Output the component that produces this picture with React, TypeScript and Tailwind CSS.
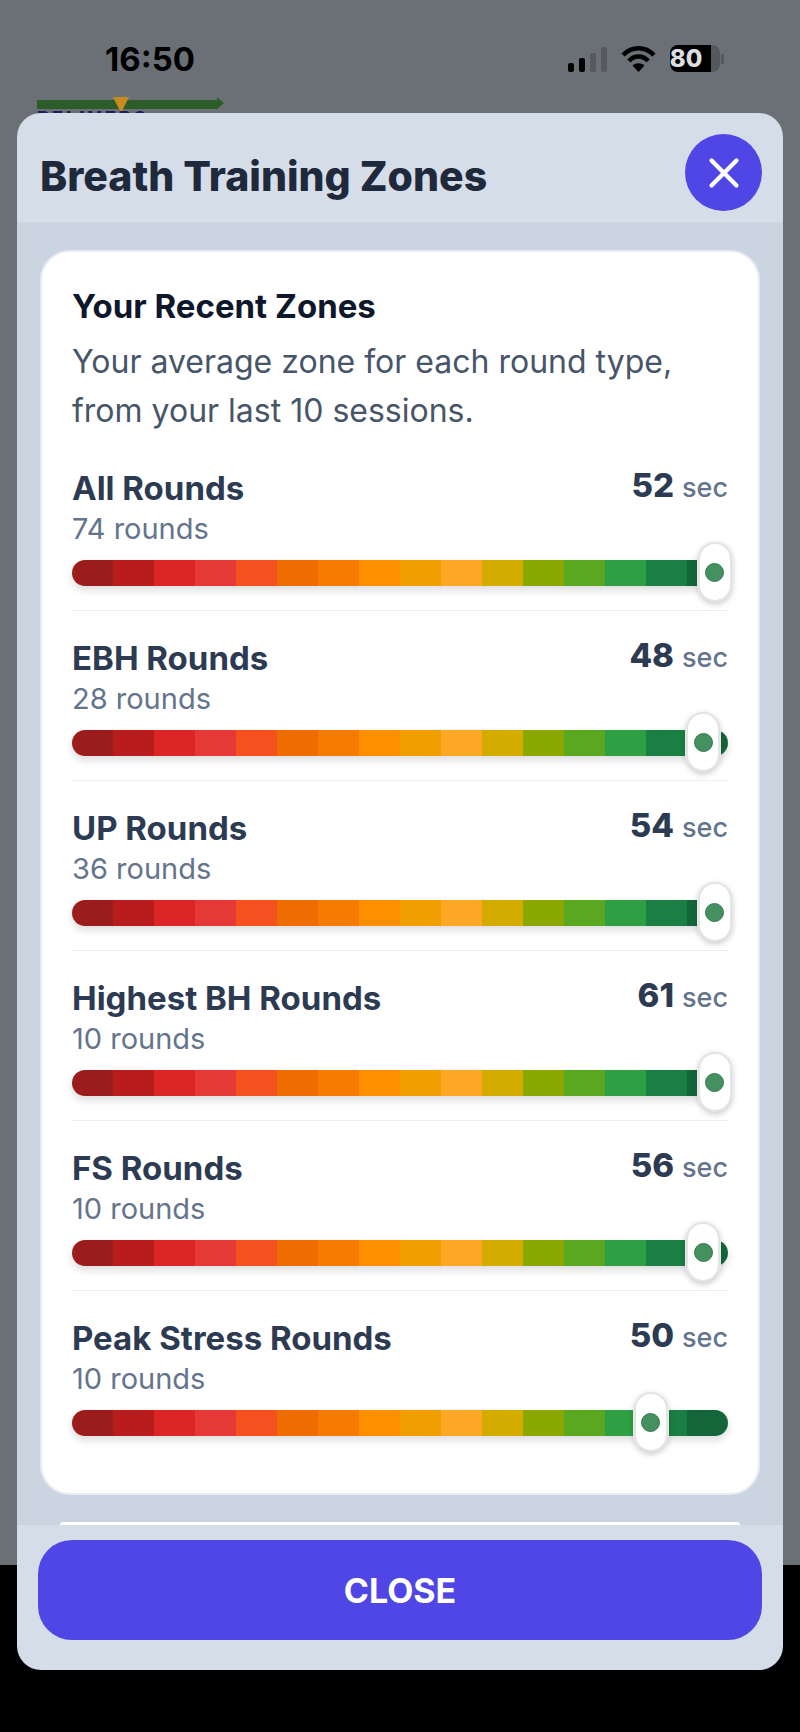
import { X } from 'lucide-react';

type Zone = { name: string; rounds: number; secs: number; pos: number };

const zones: Zone[] = [
  { name: 'All Rounds', rounds: 74, secs: 52, pos: 98 },
  { name: 'EBH Rounds', rounds: 28, secs: 48, pos: 96.2 },
  { name: 'UP Rounds', rounds: 36, secs: 54, pos: 98 },
  { name: 'Highest BH Rounds', rounds: 10, secs: 61, pos: 98 },
  { name: 'FS Rounds', rounds: 10, secs: 56, pos: 96.2 },
  { name: 'Peak Stress Rounds', rounds: 10, secs: 50, pos: 88.2 },
];

const segments = [
  '#9b1c1c', '#b91c1c', '#dc2626', '#e53935', '#f4511e', '#ef6c00', '#f57c00', '#ff8f00',
  '#f29d00', '#ffa726', '#d4ac00', '#8aa800', '#5aa820', '#2ea043', '#1a7f42', '#14663a',
];

function StatusBar() {
  return (
    <div className="flex h-[97px] items-start justify-between pl-[105px] pr-[76px] pt-[40px]">
      <span className="text-[33px] leading-[38px] font-bold text-black">16:50</span>
      <div className="flex items-center pt-[5px]">
        <div className="flex h-[26px] items-end gap-[5px]">
          <div className="h-[9px] w-[6px] rounded-[2px] bg-black" />
          <div className="h-[14px] w-[6px] rounded-[2px] bg-black" />
          <div className="h-[19px] w-[6px] rounded-[2px] bg-[#565a5e]" />
          <div className="h-[25px] w-[6px] rounded-[2px] bg-[#565a5e]" />
        </div>
        <svg className="ml-[14px]" width="35" height="26" viewBox="0 0 35 26">
          <path d="M2 9 C11 0 24 0 33 9" fill="none" stroke="#000" strokeWidth="4.5" />
          <path d="M8 15 C13 9 22 9 27 15" fill="none" stroke="#000" strokeWidth="4.5" />
          <path d="M17.5 26 L11.5 19.5 C15 16.5 20 16.5 23.5 19.5 Z" fill="#000" />
        </svg>
        <div className="ml-[14px] flex h-[27px] w-[50px] overflow-hidden rounded-[8px] bg-[#55585c]">
          <div className="flex h-full w-[41px] items-center justify-end bg-black">
            <span className="w-[50px] shrink-0 text-center text-[24px] leading-none font-extrabold text-[#dcdee0]">80</span>
          </div>
        </div>
        <div className="ml-[1px] h-[10px] w-[3px] rounded-r-[2px] bg-[#55585c]" />
      </div>
    </div>
  );
}

function ZoneBar({ pos }: { pos: number }) {
  return (
    <div className="relative mt-[13px] h-[26px] rounded-full shadow-[0_4px_8px_rgba(0,0,0,0.14)]">
      <div className="flex h-full overflow-hidden rounded-full">
        {segments.map((color) => (
          <div key={color} className="h-full flex-1" style={{ backgroundColor: color }} />
        ))}
      </div>
      <div
        className="absolute top-[-18px] flex h-[60px] w-[34px] -translate-x-1/2 items-center justify-center rounded-full border-2 border-[#e2e4e6] bg-white shadow-[0_2px_6px_rgba(0,0,0,0.22),0_0_0_1px_#fff]"
        style={{ left: `${pos}%` }}
      >
        <div className="h-[19px] w-[19px] rounded-full border border-[#35774f] bg-[#44905f]" />
      </div>
    </div>
  );
}

function ZoneRow({ zone, last }: { zone: Zone; last: boolean }) {
  return (
    <div className={last ? 'pt-[27px]' : 'border-b border-[#eceef1] pt-[27px] pb-[24px]'}>
      <div className="flex h-[40px] items-center justify-between">
        <span className="text-[33px] leading-[40px] font-bold text-[#2d3b52]">{zone.name}</span>
        <span className="leading-[40px]">
          <span className="text-[33px] font-extrabold text-[#2d3b52]">{zone.secs}</span>
          <span className="ml-[8px] text-[27px] font-medium text-[#64748b]">sec</span>
        </span>
      </div>
      <div className="mt-[3px] h-[36px] text-[29px] leading-[36px] text-[#64748b]">{zone.rounds} rounds</div>
      <ZoneBar pos={zone.pos} />
    </div>
  );
}

export default function App() {
  return (
    <div className="relative h-[1732px] w-[800px] overflow-hidden bg-black font-['Inter',sans-serif]">
      <div className="h-[1565px] bg-[#6b7076]">
        <StatusBar />
        {/* app logo, mostly hidden by the sheet */}
        <div className="relative ml-[37px] h-[16px] w-[190px] overflow-hidden">
          <svg className="absolute top-0 left-0" width="190" height="16" viewBox="0 0 190 16">
            <path d="M0 3 H180 V0 L187 6 L180 12 H0 Z" fill="#2c5c27" />
            <path d="M76 0 H92 L84 16 Z" fill="#c98a1f" />
          </svg>
          <span className="absolute top-[11px] left-0 text-[18px] leading-[20px] font-black tracking-[3px] text-[#1c1f5e]">BELIVERS</span>
        </div>
      </div>

      <div className="absolute top-[113px] left-[17px] flex h-[1557px] w-[766px] flex-col overflow-hidden rounded-[24px] bg-[#d4dde8]">
        <div className="flex h-[109px] shrink-0 items-start justify-between border-b border-[#dbe3ec] pt-[21px] pr-[21px] pl-[23px]">
          <h1 className="mt-[18px] text-[41px] leading-[48px] font-extrabold text-[#1e293b]">Breath Training Zones</h1>
          <button type="button" className="flex h-[77px] w-[77px] items-center justify-center rounded-full bg-[#4f46e5] text-white">
            <X size={50} strokeWidth={2} />
          </button>
        </div>

        <div className="h-[1303px] shrink-0 overflow-hidden bg-[#cbd5e1] px-[23px] pt-[28px]">
          <div className="h-[1245px] rounded-[30px] border-2 border-[#e6ecf3] bg-white px-[30px] pt-[30px]">
            <h2 className="text-[33px] leading-[48px] font-bold text-[#0f172a]">Your Recent Zones</h2>
            <p className="mt-[7px] text-[32px] leading-[49px] text-[#475569]">
              Your average zone for each round type,
              <br />
              from your last 10 sessions.
            </p>
            <div className="mt-[6px]">
              {zones.map((zone, i) => (
                <ZoneRow key={zone.name} zone={zone} last={i === zones.length - 1} />
              ))}
            </div>
          </div>
          <div className="mx-[20px] mt-[27px] h-[3px] rounded-t-full bg-white" />
        </div>

        <div className="px-[21px] pt-[15px]">
          <button type="button" className="flex h-[100px] w-full items-center justify-center rounded-[34px] bg-[#4f46e5] text-[34px] font-bold text-white">
            CLOSE
          </button>
        </div>
      </div>
    </div>
  );
}
